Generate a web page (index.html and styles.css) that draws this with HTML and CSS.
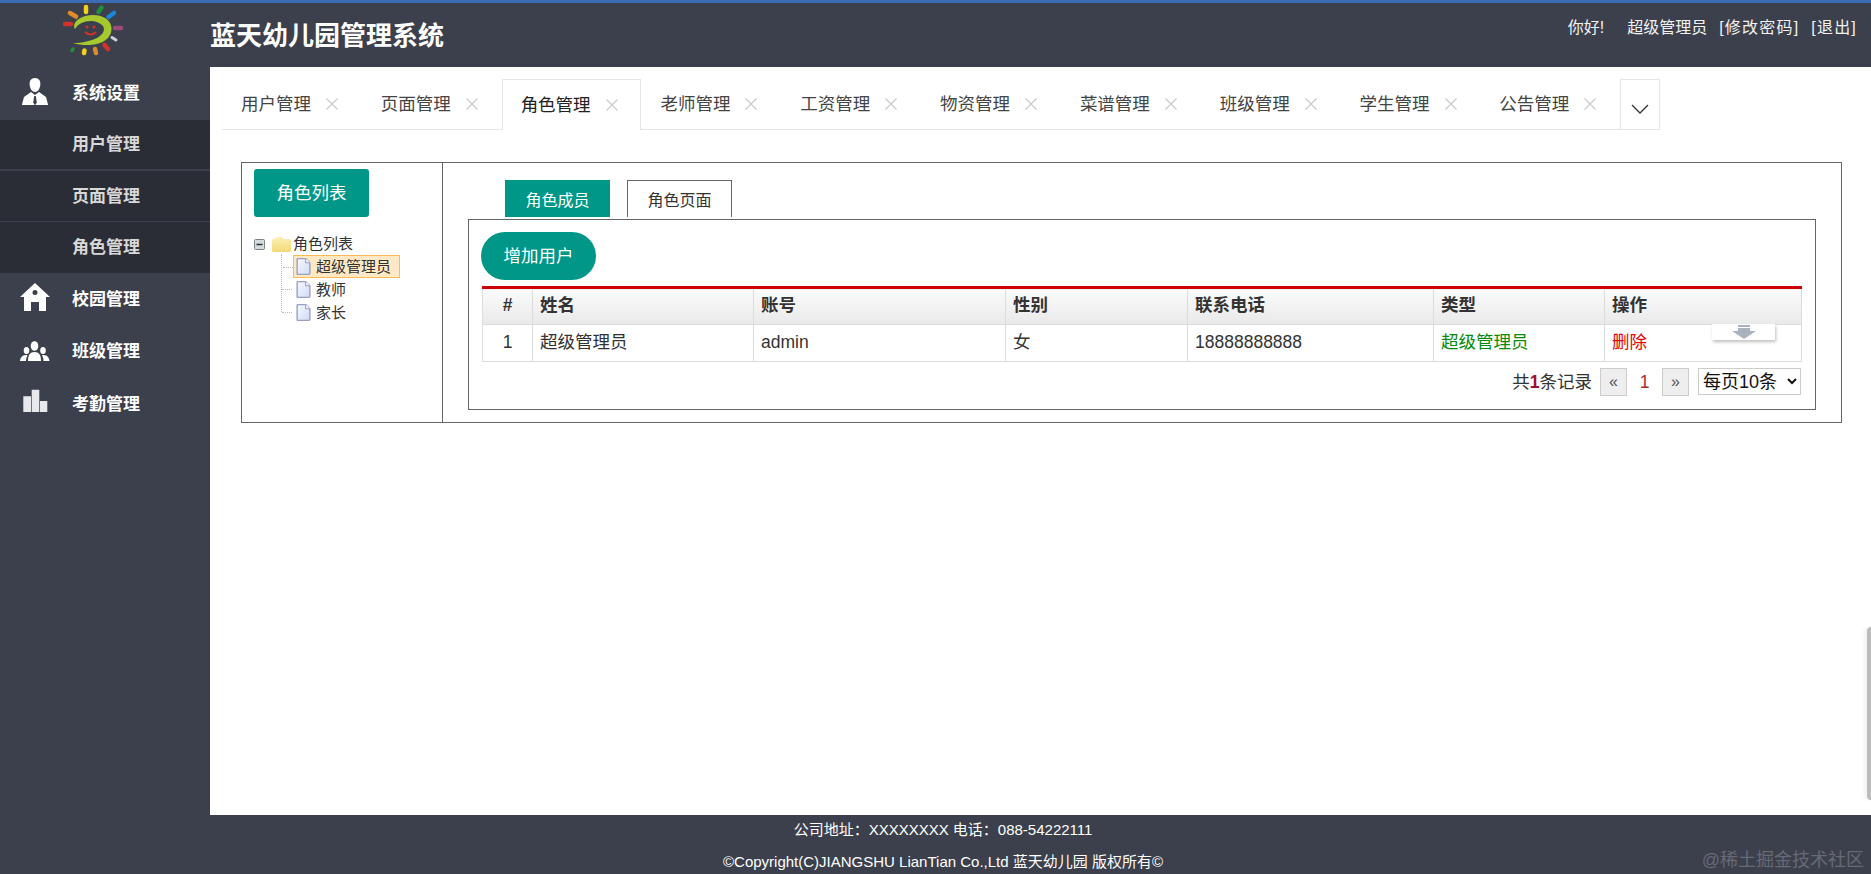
FILE: index.html
```html
<!DOCTYPE html>
<html lang="zh-CN">
<head>
    <meta charset="UTF-8">
    <title>蓝天幼儿园管理系统</title>
    <link rel="stylesheet" href="styles.css">
</head>
<body>
    <svg class="defs" width="0" height="0">
        <defs>
            <linearGradient id="folderFill" x1="0" y1="0" x2="0" y2="1">
                <stop offset="0" stop-color="#fdf0b4"/>
                <stop offset="1" stop-color="#f4d877"/>
            </linearGradient>
            <linearGradient id="docFill" x1="0" y1="0" x2="1" y2="1">
                <stop offset="0" stop-color="#f6f9ff"/>
                <stop offset="1" stop-color="#cfdcf5"/>
            </linearGradient>
        </defs>
        <symbol id="doc" viewBox="0 0 14 16">
            <path d="M1 1.500a1 1 0 0 1 1-1h7l4 4v9.500a1.500 1.500 0 0 1-1.500 1.500H2a1 1 0 0 1-1-1z" fill="url(#docFill)" stroke="#9a9fc4" stroke-width="1.300"/>
            <path d="M9 .5V4.500h4" fill="#fff" stroke="#9a9fc4"/>
        </symbol>
        <symbol id="close" viewBox="0 0 12 12">
            <path d="M.5.5l11 11M11.500.5l-11 11" fill="none" stroke="#c9c9c9" stroke-width="1.100"/>
        </symbol>
    </svg>

    <header class="header">
        <div class="brand">
            <svg class="logo" viewBox="60 4 62 52" width="62" height="52">
                <g fill="none" stroke-width="4.500" stroke-linecap="round">
                    <path d="M84 7v5" stroke="#f2d21a"/>
                    <path d="M99.500 7.500l-3 4.500" stroke="#1f8f3c"/>
                    <path d="M112 13l-5.500 4" stroke="#1e86d8"/>
                    <path d="M119 28h-6" stroke="#9c4a78"/>
                    <path d="M114 40l-4-2.500" stroke="#cfcfe0" stroke-width="3"/>
                    <path d="M106 49l-3.500-4" stroke="#d3322a"/>
                    <path d="M94 53l-1-4" stroke="#e08a2c"/>
                    <path d="M82 53l.5-2.500" stroke="#f2d21a"/>
                    <path d="M70 50.500l1-1.500" stroke="#1f8f3c" stroke-width="3.500"/>
                    <path d="M63 24h6" stroke="#d3322a"/>
                    <path d="M68 13l6 3.500" stroke="#e08a2c"/>
                </g>
                <path d="M71 43C88 48 110 44 109.500 28 109 15 88 11 76 19.500 71.500 23 71.500 27 73 29 78 20 94 18 101 26 106 35 90 43 71 43z" fill="#a5c92e"/>
                <circle cx="85" cy="27" r="1.500" fill="#d3322a"/>
                <circle cx="92" cy="27" r="1.500" fill="#d3322a"/>
                <path d="M83 32q6 5 11 0" fill="none" stroke="#d3322a" stroke-width="2"/>
            </svg>
        </div>
        <h1 class="title">蓝天幼儿园管理系统</h1>
        <div class="user-info">
            <span class="hello">你好!</span>
            <span class="user-name">超级管理员</span>
            <a class="user-link">[修改密码]</a>
            <a class="user-link">[退出]</a>
        </div>
    </header>

    <div class="layout">
        <nav class="sidebar">
            <div class="menu-item">
                <svg class="menu-icon" viewBox="0 0 30 30" width="30" height="30">
                    <path d="M15 1c4 0 5.800 3 5.300 7-.3 3-2 7-5.300 7s-5-4-5.300-7C9.200 4 11 1 15 1z" fill="#fff"/>
                    <path d="M11 15l-7 5-2 7.500a.5.5 0 0 0 .5.5h25a.5.5 0 0 0 .5-.5L26 20l-7-5-4 3z" fill="#fff"/>
                    <path d="M14.200 19h1.600l1 6.500-1.800 3-1.800-3z" fill="#3c404c"/>
                </svg>
                <span>系统设置</span>
            </div>
            <ul class="submenu">
                <li>用户管理</li>
                <li>页面管理</li>
                <li>角色管理</li>
            </ul>
            <div class="menu-item">
                <svg class="menu-icon" viewBox="0 0 30 30" width="30" height="30">
                    <path fill-rule="evenodd" d="M15 1L30 15h-4v14h-7v-9h-8v9H4V15H0zM15 8a2.500 2.500 0 1 0 0 5 2.500 2.500 0 0 0 0-5z" fill="#fff"/>
                </svg>
                <span>校园管理</span>
            </div>
            <div class="menu-item">
                <svg class="menu-icon" viewBox="0 0 30 30" width="30" height="30">
                    <ellipse cx="14.500" cy="11" rx="3.800" ry="4.800" fill="#fff"/>
                    <ellipse cx="6.500" cy="15.500" rx="2.800" ry="3.500" fill="#fff"/>
                    <ellipse cx="23" cy="15.500" rx="2.800" ry="3.500" fill="#fff"/>
                    <path d="M8 26c0-6 2-9 6.500-9S21 20 21 26z" fill="#fff"/>
                    <path d="M0 26c.3-3 2-6 6-6 .5 0 1 0 1.500.2C6.500 22 6 24 6 26zM29.500 26c-.3-3-2-6-6-6-.5 0-1 0-1.500.2 1 1.800 1.500 3.800 1.500 5.800z" fill="#fff"/>
                </svg>
                <span>班级管理</span>
            </div>
            <div class="menu-item">
                <svg class="menu-icon" viewBox="0 0 30 30" width="30" height="30">
                    <path d="M3.300 9.300H11V25H3.300zM11.700 2.700h7.600V25h-7.600zM20 14h7.300v11H20z" fill="#e8e9ee"/>
                </svg>
                <span>考勤管理</span>
            </div>
        </nav>

        <main class="main">
            <div class="tabs">
                <div class="tab"><span>用户管理</span><svg class="tab-close"><use href="#close"/></svg></div>
                <div class="tab"><span>页面管理</span><svg class="tab-close"><use href="#close"/></svg></div>
                <div class="tab active"><span>角色管理</span><svg class="tab-close"><use href="#close"/></svg></div>
                <div class="tab"><span>老师管理</span><svg class="tab-close"><use href="#close"/></svg></div>
                <div class="tab"><span>工资管理</span><svg class="tab-close"><use href="#close"/></svg></div>
                <div class="tab"><span>物资管理</span><svg class="tab-close"><use href="#close"/></svg></div>
                <div class="tab"><span>菜谱管理</span><svg class="tab-close"><use href="#close"/></svg></div>
                <div class="tab"><span>班级管理</span><svg class="tab-close"><use href="#close"/></svg></div>
                <div class="tab"><span>学生管理</span><svg class="tab-close"><use href="#close"/></svg></div>
                <div class="tab"><span>公告管理</span><svg class="tab-close"><use href="#close"/></svg></div>
                <div class="tab-more">
                    <svg viewBox="0 0 18 10" width="18" height="10"><path d="M1 1l8 8 8-8" fill="none" stroke="#333" stroke-width="1.300"/></svg>
                </div>
            </div>

            <div class="panel">
                <section class="role-col">
                    <button class="btn">角色列表</button>
                    <div class="tree">
                        <div class="tree-root">
                            <svg class="tree-toggle" viewBox="0 0 11 11" width="11" height="11">
                                <rect x=".5" y=".5" width="10" height="10" rx="1" fill="#d5dadd" stroke="#7b8488"/>
                                <path d="M2.500 5.500h6" stroke="#333" stroke-width="1.500"/>
                            </svg>
                            <svg class="tree-folder" viewBox="0 0 19 15" width="19" height="15">
                                <path d="M0 3.500a1.500 1.500 0 0 1 1.500-1.500H3l2-2h5l2 2h5.500A1.500 1.500 0 0 1 19 3.500V13.500A1.500 1.500 0 0 1 17.500 15h-16A1.500 1.500 0 0 1 0 13.500z" fill="url(#folderFill)"/>
                            </svg>
                            <span>角色列表</span>
                        </div>
                        <ul class="tree-list">
                            <li class="tree-leaf selected"><svg width="15" height="17"><use href="#doc"/></svg><span>超级管理员</span></li>
                            <li class="tree-leaf"><svg width="15" height="17"><use href="#doc"/></svg><span>教师</span></li>
                            <li class="tree-leaf"><svg width="15" height="17"><use href="#doc"/></svg><span>家长</span></li>
                        </ul>
                    </div>
                </section>

                <section class="detail-col">
                    <div class="sub-tabs">
                        <div class="sub-tab on">角色成员</div>
                        <div class="sub-tab">角色页面</div>
                    </div>
                    <div class="sub-body">
                        <button class="btn btn-round">增加用户</button>
                        <div class="table-wrap">
                            <table class="grid">
                                <colgroup>
                                    <col class="c-no"><col class="c-name"><col class="c-account"><col class="c-sex">
                                    <col class="c-phone"><col class="c-type"><col class="c-op">
                                </colgroup>
                                <thead>
                                    <tr>
                                        <th class="center">#</th><th>姓名</th><th>账号</th><th>性别</th>
                                        <th>联系电话</th><th>类型</th><th>操作</th>
                                    </tr>
                                </thead>
                                <tbody>
                                    <tr>
                                        <td class="center">1</td><td>超级管理员</td><td>admin</td><td>女</td>
                                        <td>18888888888</td><td class="green">超级管理员</td><td class="red">删除</td>
                                    </tr>
                                </tbody>
                            </table>
                            <div class="float-tip">
                                <svg viewBox="0 0 24 14" width="24" height="14"><path d="M6 0h12v2H6zM6 3h12v3h6L12 14 0 6h6z" fill="#a9b3bf"/></svg>
                            </div>
                        </div>
                        <div class="pager">
                            <span class="pager-total">共<b>1</b>条记录</span>
                            <a class="page-btn">«</a>
                            <span class="page-num">1</span>
                            <a class="page-btn">»</a>
                            <select class="page-size"><option>每页10条</option></select>
                        </div>
                    </div>
                </section>
            </div>
        </main>
    </div>

    <footer class="footer">
        <p>公司地址：XXXXXXXX 电话：088-54222111</p>
        <p>©Copyright(C)JIANGSHU LianTian Co.,Ltd 蓝天幼儿园 版权所有©</p>
        <span class="watermark">@稀土掘金技术社区</span>
    </footer>
    <div class="scroll-thumb"></div>
</body>
</html>
```

FILE: styles.css
```css
* {
    box-sizing: border-box;
}
body {
    margin: 0;
    height: 100vh;
    overflow: hidden;
    display: flex;
    flex-direction: column;
    font-family: "Liberation Sans", "Noto Sans CJK SC", sans-serif;
    color: #333;
    background: #fff;
}
.defs {
    position: absolute;
}
ul {
    list-style: none;
    margin: 0;
    padding: 0;
}

/* header */
.header {
    height: 67px;
    flex: none;
    display: flex;
    border-top: 3px solid #3a6db5;
    background: #3c404c;
    color: #fff;
}
.brand {
    width: 210px;
    padding: 1px 0 0 62px;
}
.logo {
    display: block;
}
.title {
    margin: 0;
    font-size: 26px;
    line-height: 66px;
    height: 64px;
    font-weight: 700;
    white-space: nowrap;
}
.user-info {
    margin-left: auto;
    padding: 14px 14px 0 0;
    display: flex;
    gap: 12px;
    font-size: 16px;
    line-height: 22px;
    color: #f2f2f2;
}
.hello {
    margin-right: 11px;
}
.user-link {
    letter-spacing: 1.200px;
}

/* sidebar */
.layout {
    flex: 1;
    display: flex;
    min-height: 0;
}
.sidebar {
    width: 210px;
    flex: none;
    background: #3c404c;
    color: #fff;
}
.menu-item {
    height: 52.500px;
    display: flex;
    align-items: center;
    padding: 0 0 3px 20px;
    font-size: 17px;
    font-weight: 700;
}
.menu-icon {
    flex: none;
    margin-right: 22px;
}
.submenu li {
    height: 51px;
    display: flex;
    align-items: center;
    padding: 0 0 3px 72px;
    background: #2a2d36;
    border-bottom: 1px solid #3c404c;
    color: #d8d8d8;
    font-size: 17px;
    font-weight: 700;
}
.submenu li:first-child {
    border-bottom-width: 2px;
}
.submenu li:last-child {
    border-bottom: none;
}

/* tabs */
.main {
    flex: 1;
    min-width: 0;
}
.tabs {
    display: flex;
    width: 1438px;
    height: 51px;
    margin: 12px 0 0 12px;
    border-bottom: 1px solid #e6e6e6;
}
.tab {
    width: 140.100px;
    height: 50px;
    display: flex;
    align-items: center;
    padding: 0 0 3px 19px;
    font-size: 17.500px;
    color: #444;
}
.tab.active {
    height: 51px;
    border: 1px solid #e6e6e6;
    border-bottom: none;
    padding: 0 0 4px 18px;
    background: #fff;
    color: #222;
}
.tab-close {
    width: 12px;
    height: 12px;
    margin: 3px 0 0 15px;
}
.tab-more {
    width: 40px;
    height: 50px;
    border: 1px solid #e6e6e6;
    border-bottom: none;
    display: flex;
    align-items: center;
    justify-content: center;
    padding-top: 8px;
}

/* role panel */
.panel {
    display: flex;
    width: 1601px;
    height: 261px;
    margin: 32px 0 0 31px;
    border: 1px solid #666;
}
.role-col {
    width: 201px;
    flex: none;
    border-right: 1px solid #666;
    padding: 6px 0 0 12px;
}
.btn {
    display: block;
    width: 115px;
    height: 48px;
    border: none;
    border-radius: 3px;
    background: #009688;
    color: #fff;
    font-family: inherit;
    font-size: 17.500px;
    padding: 0 0 4px;
}
.btn-round {
    border-radius: 24px;
}

/* tree */
.tree {
    margin-top: 17px;
    font-size: 15px;
    line-height: 20px;
    color: #333;
}
.tree-root {
    display: flex;
    align-items: center;
    height: 20px;
}
.tree-folder {
    margin: 0 2px 0 7px;
}
.tree-list {
    margin-left: 27px;
    border-left: 1px dotted #bbb;
    height: 58px;
    padding-top: 1px;
}
.tree-leaf {
    position: relative;
    display: flex;
    align-items: center;
    width: 107px;
    height: 23px;
    margin-left: 11px;
    padding-left: 3px;
}
.tree-leaf::before {
    content: "";
    position: absolute;
    left: -11px;
    top: 11px;
    width: 10px;
    border-top: 1px dotted #bbb;
}
.tree-leaf span {
    margin-left: 5px;
}
.tree-leaf.selected {
    background: #ffe9c4;
    border: 1px solid #ffb951;
    padding-left: 2px;
}

/* member detail */
.detail-col {
    flex: 1;
    min-width: 0;
    padding: 17px 25px 0;
}
.sub-tabs {
    display: flex;
    gap: 17px;
    height: 37px;
    margin-left: 37px;
}
.sub-tab {
    width: 105px;
    border: 1px solid #666;
    border-bottom: none;
    display: flex;
    align-items: center;
    justify-content: center;
    font-size: 16px;
    padding-bottom: 1px;
}
.sub-tab.on {
    background: #009688;
    border-color: #009688;
    color: #fff;
}
.sub-body {
    height: 191px;
    margin-top: 2px;
    border: 1px solid #666;
    padding: 12px;
}

/* table */
.table-wrap {
    position: relative;
    margin: 6px 0 0 1px;
}
.grid {
    width: 1319px;
    table-layout: fixed;
    border-collapse: collapse;
    font-size: 17.500px;
    border-top: 3px solid #c00;
}
.c-no { width: 50px; }
.c-name { width: 221px; }
.c-account { width: 252px; }
.c-sex { width: 182px; }
.c-phone { width: 246px; }
.c-type { width: 171px; }
.c-op { width: 197px; }
.grid th,
.grid td {
    border: 1px solid #dcdcdc;
    padding: 0 7px 2px;
    text-align: left;
    height: 37px;
    line-height: 24px;
}
.grid th {
    padding-bottom: 3px;
    background: linear-gradient(to bottom, #fbfbfb, #e9e9e9);
    font-weight: 700;
    color: #333;
    border-top: none;
}
.grid .center {
    text-align: center;
}
.green {
    color: #0a8a0a;
}
.red {
    color: #e60000;
}
.float-tip {
    position: absolute;
    left: 1230px;
    top: 38px;
    width: 63px;
    height: 16px;
    background: #fff;
    box-shadow: 1px 2px 3px rgba(0, 0, 0, 0.25);
    display: flex;
    justify-content: center;
    align-items: flex-end;
    padding-bottom: 1px;
    overflow: hidden;
}

/* pager */
.pager {
    display: flex;
    justify-content: flex-end;
    align-items: flex-start;
    width: 1319px;
    margin: 6px 0 0 1px;
    font-size: 17.500px;
}
.pager-total {
    line-height: 28px;
    margin-right: 8px;
}
.pager-total b {
    color: #a0102a;
}
.page-btn {
    width: 27px;
    height: 28px;
    border: 1px solid #ccc;
    background: #eee;
    color: #555;
    text-align: center;
    line-height: 26px;
    font-size: 16px;
}
.page-num {
    width: 35px;
    text-align: center;
    line-height: 28px;
    color: #a5302a;
}
.page-size {
    width: 103px;
    height: 27px;
    margin-left: 9px;
    background: #fff;
    border: 1px solid #ccc;
    font-family: inherit;
    font-size: 18px;
    color: #111;
    padding: 0;
}

/* footer */
.footer {
    position: relative;
    height: 59px;
    flex: none;
    background: #3c404c;
    color: #fff;
    font-size: 15px;
    text-align: center;
    padding: 4px 0 0 15px;
}
.footer p {
    margin: 0 0 10px;
    line-height: 22px;
}
.footer p + p {
    margin-bottom: 0;
}
.watermark {
    position: absolute;
    right: 7px;
    top: 30px;
    font-size: 18px;
    color: #666a75;
}
.scroll-thumb {
    position: absolute;
    right: 0;
    top: 627px;
    width: 4px;
    height: 173px;
    border-radius: 4px 0 0 4px;
    background: #bcbcbc;
    box-shadow: -2px 0 4px rgba(0, 0, 0, 0.08);
}
```
